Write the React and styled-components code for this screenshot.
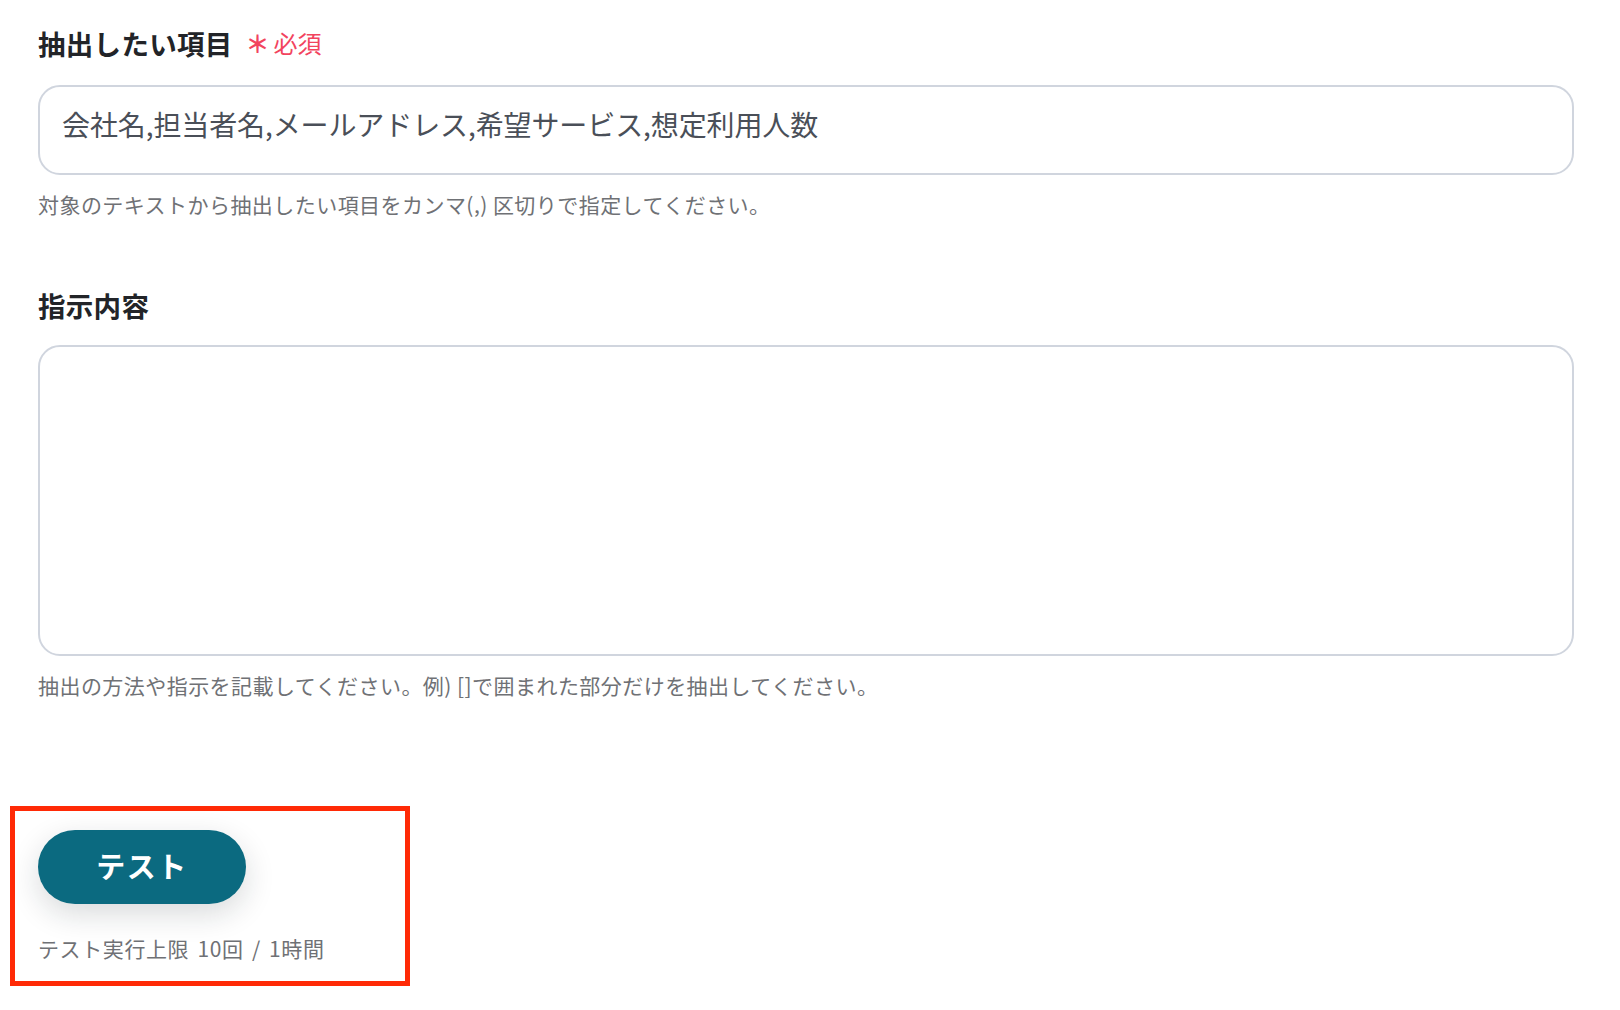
import React from "react";
import styled, { createGlobalStyle } from "styled-components";

const GlobalStyle = createGlobalStyle`
  body {
    margin: 0;
    background: #ffffff;
    font-family: "Noto Sans CJK JP", "Noto Sans", sans-serif;
  }
`;

const Page = styled.div`
  width: 1620px;
  height: 1010px;
  box-sizing: border-box;
  padding: 22px 46px 0 38px;
  background: #ffffff;
  overflow: hidden;
`;

const Field = styled.div`
  display: flex;
  flex-direction: column;
  margin-bottom: ${props => props.gapAfter || 0}px;
`;

const LabelRow = styled.div`
  display: flex;
  align-items: center;
  gap: 13px;
  height: 42px;
  margin-bottom: ${props => props.gap}px;
`;

const Label = styled.span`
  font-size: 27.5px;
  font-weight: 700;
  color: #222428;
  line-height: 42px;
  letter-spacing: 0.3px;
`;

const Required = styled.span`
  display: flex;
  align-items: center;
  gap: 4px;
  color: #f2445e;
  font-size: 24px;
  line-height: 42px;
`;

const Asterisk = styled.span`
  font-weight: 700;
  font-size: 24px;
`;

const Input = styled.div`
  box-sizing: border-box;
  height: 90px;
  border: 2px solid #d0d5de;
  border-radius: 22px;
  padding: 16px 22px 0;
  font-size: 28px;
  line-height: 42px;
  color: #4a4f58;
  letter-spacing: -0.1px;
`;

const TextArea = styled.div`
  box-sizing: border-box;
  height: 311px;
  border: 2px solid #d0d5de;
  border-radius: 22px;
`;

const Help = styled.p`
  margin: 14px 0 0;
  font-size: 21px;
  line-height: 30px;
  color: #6f7175;
  letter-spacing: 0.45px;
`;

const Highlight = styled.section`
  box-sizing: border-box;
  width: 400px;
  margin: 106px 0 0 -28px;
  border: 5px solid #ff2a06;
  padding: 19px 23px 18px;
  display: flex;
  flex-direction: column;
  align-items: flex-start;
  gap: 29px;
`;

const TestButton = styled.button`
  width: 208px;
  height: 74px;
  border: none;
  border-radius: 37px;
  padding: 0 0 5px;
  background: #0b6a80;
  color: #ffffff;
  font-family: inherit;
  font-size: 29px;
  font-weight: 700;
  letter-spacing: 1.5px;
  box-shadow: 0 10px 30px rgba(20, 30, 40, 0.16);
  cursor: pointer;
`;

const Limit = styled.span`
  font-size: 21px;
  line-height: 30px;
  color: #6f7175;
  letter-spacing: 0.6px;
  word-spacing: 3px;
`;

export default function App() {
  return (
    <>
      <GlobalStyle />
      <Page>
        <Field gapAfter={65}>
          <LabelRow gap={21}>
            <Label>抽出したい項目</Label>
            <Required>
              <Asterisk>＊</Asterisk>必須
            </Required>
          </LabelRow>
          <Input>会社名,担当者名,メールアドレス,希望サービス,想定利用人数</Input>
          <Help>対象のテキストから抽出したい項目をカンマ(,) 区切りで指定してください。</Help>
        </Field>
        <Field>
          <LabelRow gap={19}>
            <Label>指示内容</Label>
          </LabelRow>
          <TextArea />
          <Help>抽出の方法や指示を記載してください。例) []で囲まれた部分だけを抽出してください。</Help>
        </Field>
        <Highlight>
          <TestButton>テスト</TestButton>
          <Limit>テスト実行上限 10回 / 1時間</Limit>
        </Highlight>
      </Page>
    </>
  );
}
